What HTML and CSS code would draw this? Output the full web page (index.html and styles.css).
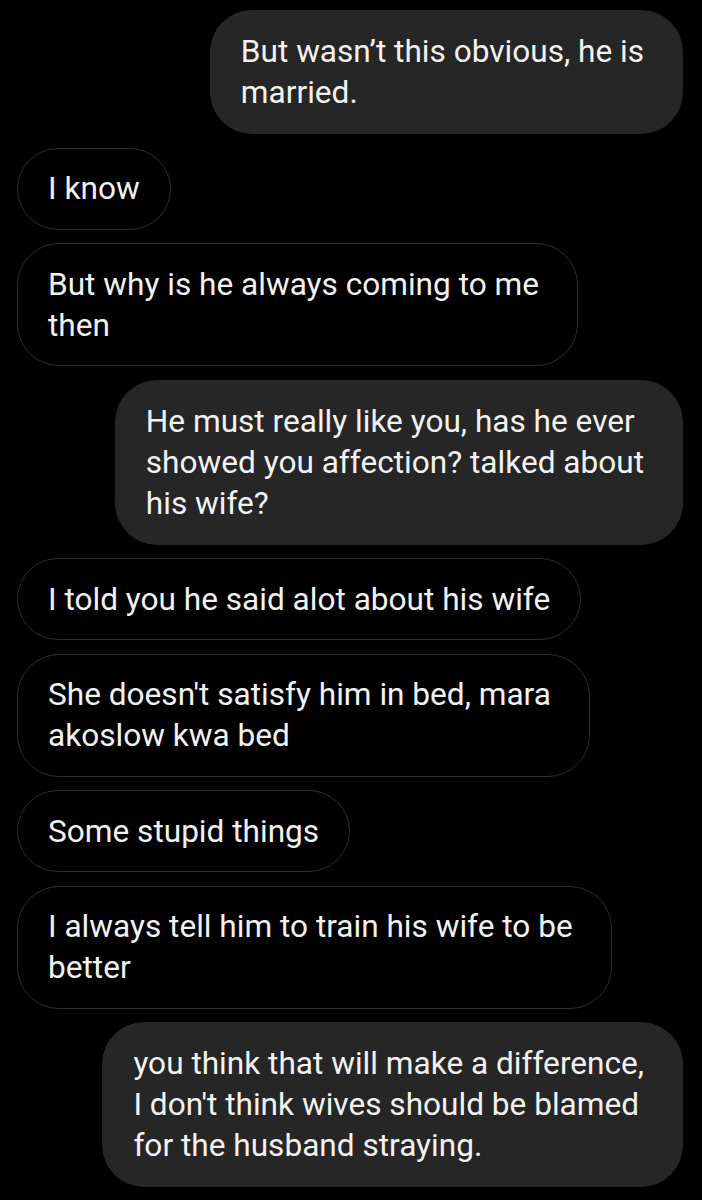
FILE: index.html
```html
<!DOCTYPE html>
<html lang="en">
<head>
<meta charset="utf-8">
<title>Chat</title>
<link rel="stylesheet" href="styles.css">
</head>
<body>
<main class="chat">
  <div class="msg out multi">But wasn’t this obvious, he is<br>married.</div>
  <div class="msg in">I know</div>
  <div class="msg in multi">But why is he always coming to me<br>then</div>
  <div class="msg out multi">He must really like you, has he ever<br>showed you affection? talked about<br>his wife?</div>
  <div class="msg in">I told you he said alot about his wife</div>
  <div class="msg in multi">She doesn't satisfy him in bed, mara<br>akoslow kwa bed</div>
  <div class="msg in">Some stupid things</div>
  <div class="msg in multi">I always tell him to train his wife to be<br>better</div>
  <div class="msg out multi">you think that will make a difference,<br>I don't think wives should be blamed<br>for the husband straying.</div>
</main>
</body>
</html>
```
FILE: styles.css
```css
html, body {
  margin: 0;
  padding: 0;
  background: #000;
}

body {
  width: 702px;
  height: 1200px;
  overflow: hidden;
  font-family: "Roboto", "Liberation Sans", sans-serif;
  color: #f2f2f2;
}

.chat {
  display: flex;
  flex-direction: column;
  gap: 13.5px;
  padding: 10px 19px 0 17px;
}

.msg {
  width: fit-content;
  font-size: 31.6px;
  line-height: 41px;
  border-radius: 42px;
  padding: 21px 31px;
  box-sizing: border-box;
  white-space: nowrap;
}

.msg.multi {
  padding-right: 39px;
}

.out {
  align-self: flex-end;
  background: #262626;
}

.in {
  align-self: flex-start;
  background: #000;
  border: 1.5px solid #2f2f2f;
  padding: 19.5px 30px;
}

.in.multi {
  padding-right: 38px;
}
```
